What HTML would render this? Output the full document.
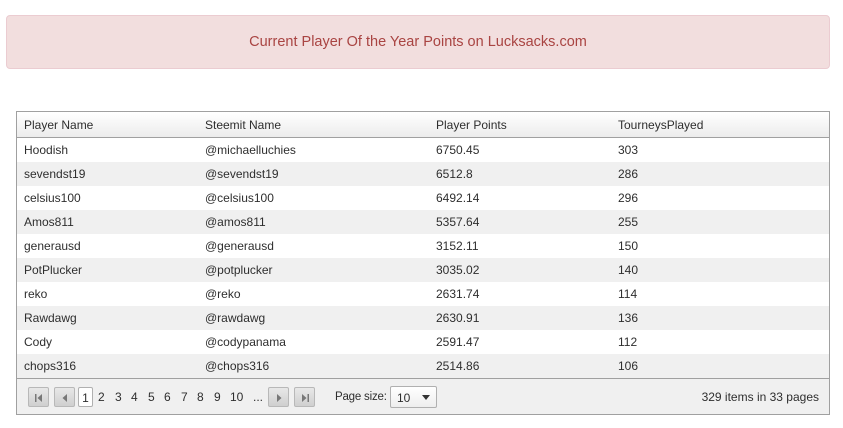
<!DOCTYPE html>
<html><head><style>
*{box-sizing:border-box;margin:0;padding:0}
body{width:843px;height:428px;background:#fff;font-family:"Liberation Sans",sans-serif;font-size:12px;color:#2e2e2e;position:relative;overflow:hidden}
.banner{position:absolute;left:6px;top:15px;width:824px;height:54px;background:#f2dede;border:1px solid #ebccd1;border-radius:4px;color:#a94442;font-size:14.5px;text-align:center;line-height:52px}
.grid{position:absolute;left:16px;top:111px;width:814px;height:304px;border:1px solid #a0a0a0}
.hdr{height:26px;background:linear-gradient(#fff,#ececec);border-bottom:1px solid #a0a0a0;position:relative}
.row{height:24px;position:relative}
.row.alt{background:#f0f0f0}
.c{position:absolute;top:0;line-height:24px;white-space:nowrap}
.hdr .c{line-height:27px}
.c1{left:7px}.c2{left:188px}.c3{left:419px}.c4{left:601px}
.pager{position:absolute;left:0;right:0;bottom:0;height:36px;background:#f0f0f0;border-top:1px solid #a0a0a0}
.btn{position:absolute;top:8px;width:21px;height:20px;border:1px solid #b8b8b8;border-radius:2px;background:linear-gradient(#e8e8e8,#cfcfcf)}
.btn svg{position:absolute;left:5px;top:5px}
.pg{position:absolute;top:8px;height:20px;line-height:20px;font-size:12px}
.cur{border:1px solid #b0b0b0;background:#fff;border-radius:2px;width:15px;text-align:center}
.sel{position:absolute;left:373px;top:7px;width:47px;height:22px;border:1px solid #b0b0b0;border-radius:2px;background:linear-gradient(#fff,#eee);line-height:22px;padding-left:6px}
</style></head><body>
<div class="banner">Current Player Of the Year Points on Lucksacks.com</div>
<div class="grid">
<div class="hdr"><span class="c c1">Player Name</span><span class="c c2">Steemit Name</span><span class="c c3">Player Points</span><span class="c c4">TourneysPlayed</span></div>
<div class="row"><span class="c c1">Hoodish</span><span class="c c2">@michaelluchies</span><span class="c c3">6750.45</span><span class="c c4">303</span></div>
<div class="row alt"><span class="c c1">sevendst19</span><span class="c c2">@sevendst19</span><span class="c c3">6512.8</span><span class="c c4">286</span></div>
<div class="row"><span class="c c1">celsius100</span><span class="c c2">@celsius100</span><span class="c c3">6492.14</span><span class="c c4">296</span></div>
<div class="row alt"><span class="c c1">Amos811</span><span class="c c2">@amos811</span><span class="c c3">5357.64</span><span class="c c4">255</span></div>
<div class="row"><span class="c c1">generausd</span><span class="c c2">@generausd</span><span class="c c3">3152.11</span><span class="c c4">150</span></div>
<div class="row alt"><span class="c c1">PotPlucker</span><span class="c c2">@potplucker</span><span class="c c3">3035.02</span><span class="c c4">140</span></div>
<div class="row"><span class="c c1">reko</span><span class="c c2">@reko</span><span class="c c3">2631.74</span><span class="c c4">114</span></div>
<div class="row alt"><span class="c c1">Rawdawg</span><span class="c c2">@rawdawg</span><span class="c c3">2630.91</span><span class="c c4">136</span></div>
<div class="row"><span class="c c1">Cody</span><span class="c c2">@codypanama</span><span class="c c3">2591.47</span><span class="c c4">112</span></div>
<div class="row alt"><span class="c c1">chops316</span><span class="c c2">@chops316</span><span class="c c3">2514.86</span><span class="c c4">106</span></div>
<div class="pager">
<div class="btn" style="left:11px"><svg width="10" height="10"><rect x="1" y="1" width="1.5" height="8" fill="#777"/><path d="M8 1L3.5 5L8 9Z" fill="#777"/></svg></div>
<div class="btn" style="left:37px"><svg width="10" height="10"><path d="M7 1L2.5 5L7 9Z" fill="#777"/></svg></div>
<div class="pg cur" style="left:61px">1</div>
<div class="pg" style="left:81px">2</div>
<div class="pg" style="left:98px">3</div>
<div class="pg" style="left:114px">4</div>
<div class="pg" style="left:131px">5</div>
<div class="pg" style="left:147px">6</div>
<div class="pg" style="left:164px">7</div>
<div class="pg" style="left:180px">8</div>
<div class="pg" style="left:197px">9</div>
<div class="pg" style="left:213px">10</div>
<div class="pg" style="left:236px">...</div>
<div class="btn" style="left:251px"><svg width="10" height="10"><path d="M3 1L7.5 5L3 9Z" fill="#777"/></svg></div>
<div class="btn" style="left:277px"><svg width="10" height="10"><path d="M2 1L6.5 5L2 9Z" fill="#777"/><rect x="7.5" y="1" width="1.5" height="8" fill="#777"/></svg></div>
<div class="pg" style="left:318px;font-size:11.5px;letter-spacing:-0.2px">Page size:</div>
<div class="sel">10<svg width="8" height="5" style="position:absolute;right:6px;top:8px"><path d="M0 0H8L4 5Z" fill="#333"/></svg></div>
<div class="pg" style="right:10px">329 items in 33 pages</div>
</div>
</div>
</body></html>
